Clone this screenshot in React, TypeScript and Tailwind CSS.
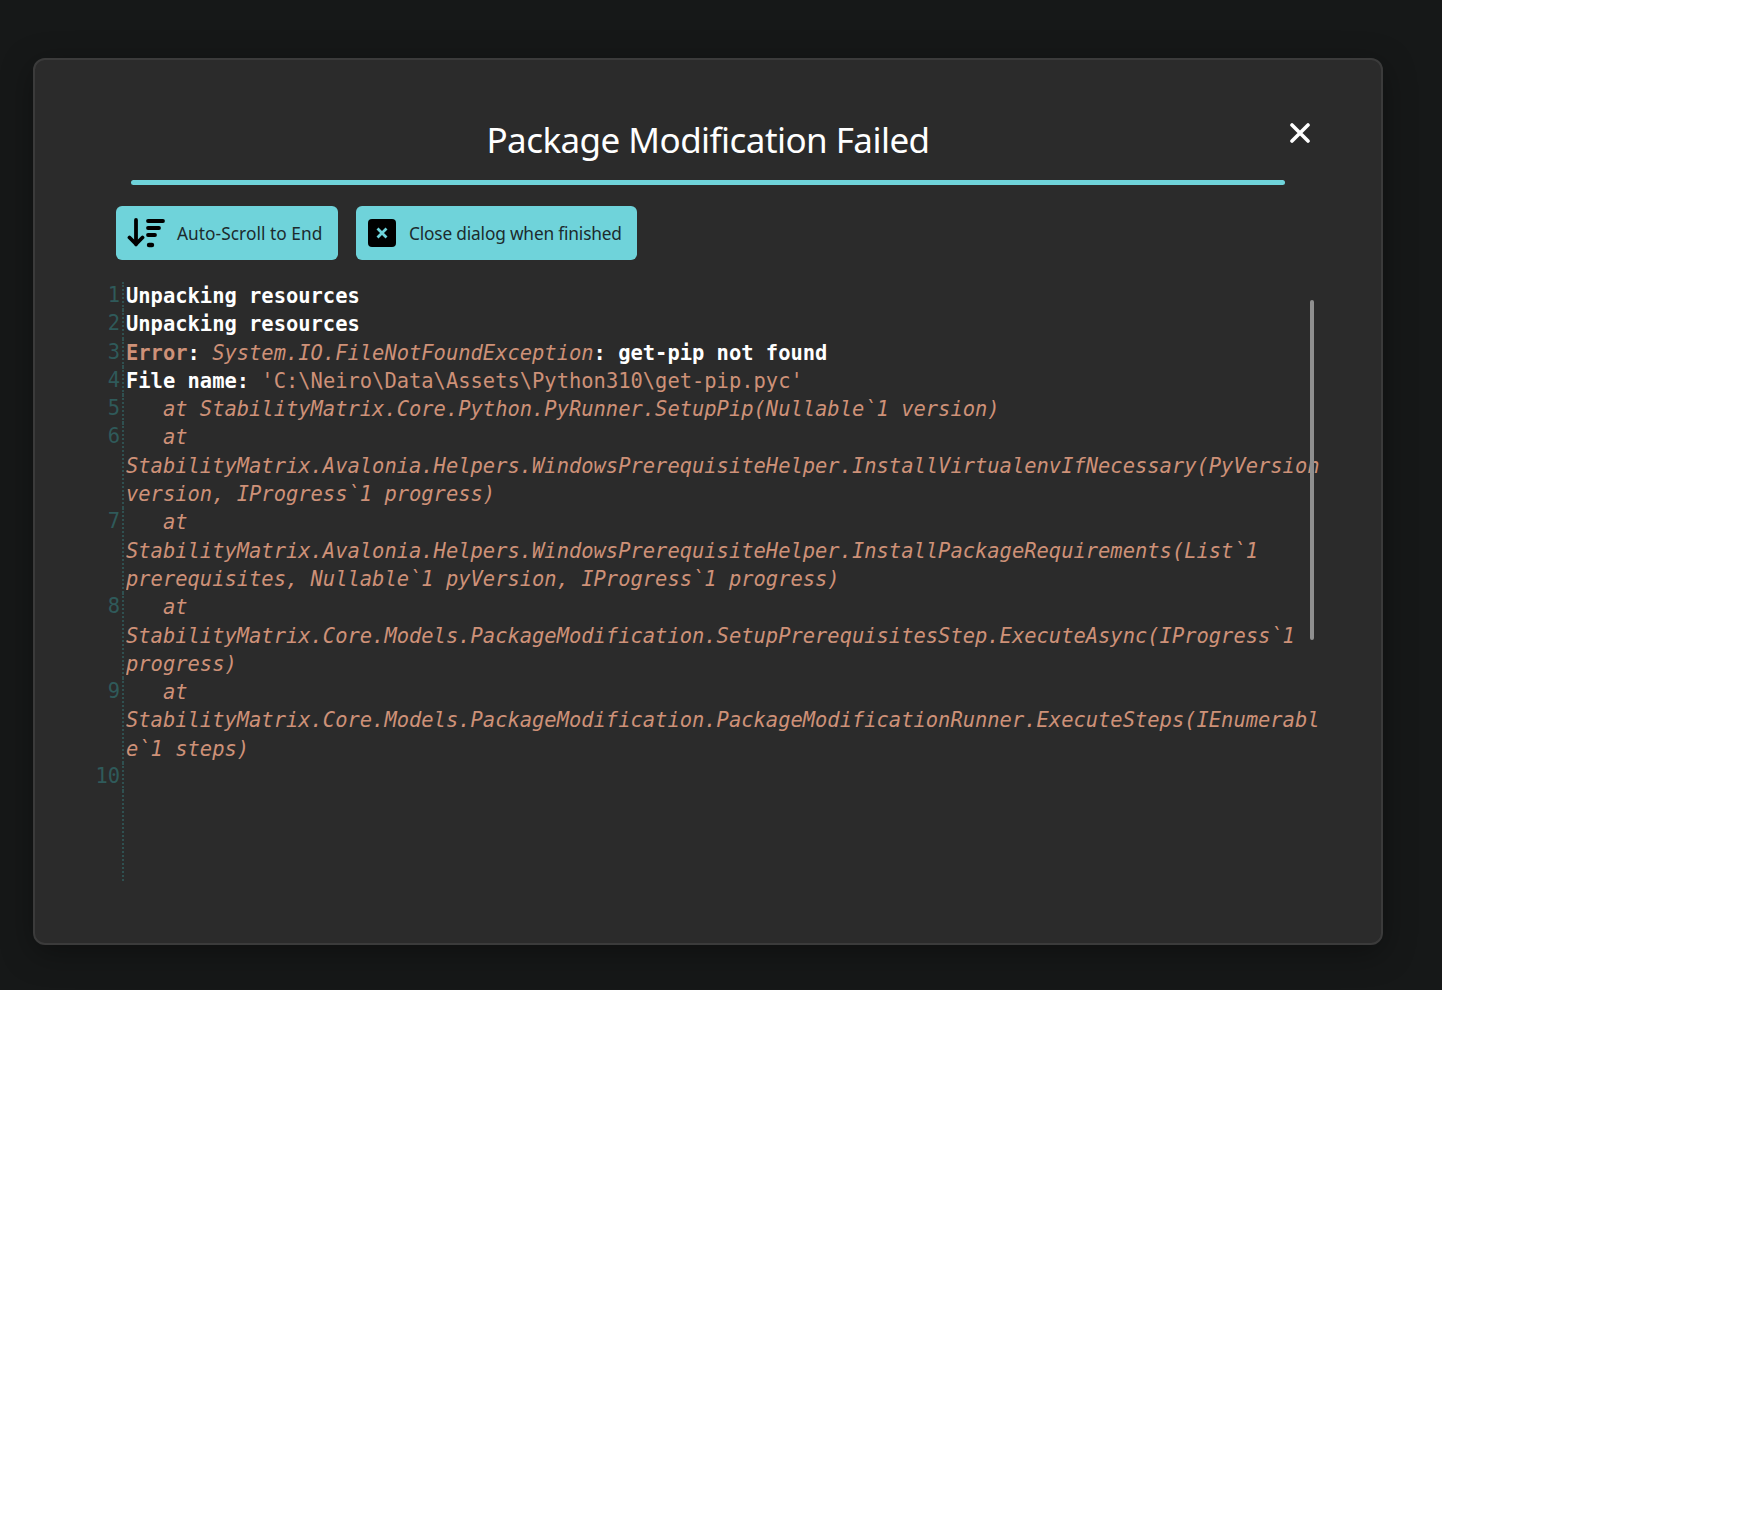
const ui = "font-['Noto_Sans',sans-serif]";

type Seg = { t: string; kind?: "plain" | "err" | "strong" };
type LogLine = { n: number; rows: Seg[][] };

const log: LogLine[] = [
  { n: 1, rows: [[{ t: "Unpacking resources" }]] },
  { n: 2, rows: [[{ t: "Unpacking resources" }]] },
  {
    n: 3,
    rows: [
      [
        { t: "Error", kind: "strong" },
        { t: ": " },
        { t: "System.IO.FileNotFoundException", kind: "err" },
        { t: ": get-pip not found" },
      ],
    ],
  },
  {
    n: 4,
    rows: [
      [
        { t: "File name: " },
        { t: "'C:\\Neiro\\Data\\Assets\\Python310\\get-pip.pyc'", kind: "plain" },
      ],
    ],
  },
  { n: 5, rows: [[{ t: "   at StabilityMatrix.Core.Python.PyRunner.SetupPip(Nullable`1 version)", kind: "err" }]] },
  {
    n: 6,
    rows: [
      [{ t: "   at", kind: "err" }],
      [{ t: "StabilityMatrix.Avalonia.Helpers.WindowsPrerequisiteHelper.InstallVirtualenvIfNecessary(PyVersion", kind: "err" }],
      [{ t: "version, IProgress`1 progress)", kind: "err" }],
    ],
  },
  {
    n: 7,
    rows: [
      [{ t: "   at", kind: "err" }],
      [{ t: "StabilityMatrix.Avalonia.Helpers.WindowsPrerequisiteHelper.InstallPackageRequirements(List`1", kind: "err" }],
      [{ t: "prerequisites, Nullable`1 pyVersion, IProgress`1 progress)", kind: "err" }],
    ],
  },
  {
    n: 8,
    rows: [
      [{ t: "   at", kind: "err" }],
      [{ t: "StabilityMatrix.Core.Models.PackageModification.SetupPrerequisitesStep.ExecuteAsync(IProgress`1", kind: "err" }],
      [{ t: "progress)", kind: "err" }],
    ],
  },
  {
    n: 9,
    rows: [
      [{ t: "   at", kind: "err" }],
      [{ t: "StabilityMatrix.Core.Models.PackageModification.PackageModificationRunner.ExecuteSteps(IEnumerabl", kind: "err" }],
      [{ t: "e`1 steps)", kind: "err" }],
    ],
  },
  { n: 10, rows: [[{ t: " " }]] },
];

function segClass(kind?: Seg["kind"]) {
  if (kind === "err") return "italic font-normal text-[#ce9178]";
  if (kind === "plain") return "font-normal text-[#ce9178]";
  if (kind === "strong") return "font-bold text-[#ce9178]";
  return "font-semibold text-white";
}

function ScrollEndIcon() {
  return (
    <svg viewBox="0 0 38 30" className="h-[30px] w-[38px]" fill="none" stroke="#000" strokeLinecap="round">
      <path d="M9 2v24" strokeWidth="3.8" />
      <path d="M2.5 19.5 9 26l6.5-6.5" strokeWidth="3.8" />
      <path d="M21 3h15" strokeWidth="3.8" />
      <path d="M21 10h11" strokeWidth="3.8" />
      <path d="M21 17h7" strokeWidth="3.8" />
      <path d="M22 27h3" strokeWidth="4.4" />
    </svg>
  );
}

function CloseBoxIcon() {
  return (
    <span className="flex h-[28px] w-[28px] items-center justify-center rounded-[4px] bg-black">
      <svg viewBox="0 0 12 12" className="h-[12px] w-[12px]" fill="none" stroke="#6fd3da" strokeWidth="2.8">
        <path d="M1.5 1.5l9 9M10.5 1.5l-9 9" />
      </svg>
    </span>
  );
}

export default function App() {
  return (
    <div className="h-[1533px] bg-white">
      <div className="h-[990px] w-[1442px] bg-[#161818] pl-[33px] pt-[58px]">
        {/* dialog */}
        <div className="relative h-[887px] w-[1350px] rounded-[12px] border-2 border-[#3b3b3b] bg-[#2b2b2b] shadow-[0_8px_32px_rgba(0,0,0,0.35)]">
          <h1 className={`${ui} ml-[96px] w-[1154px] pt-[50px] text-center text-[35px] leading-[60px] tracking-[-0.55px] text-white`}>
            Package Modification Failed
          </h1>
          <div className="ml-[96px] mt-[10px] h-[5px] w-[1154px] rounded-full bg-[#6fd3da]" />

          <button className="absolute left-[1255px] top-[63px] text-white">
            <svg viewBox="0 0 20 20" className="h-[20px] w-[20px]" fill="none" stroke="currentColor" strokeWidth="3.6" strokeLinecap="round">
              <path d="M2 2l16 16M18 2L2 18" />
            </svg>
          </button>

          {/* toggles */}
          <div className={`${ui} ml-[81px] mt-[21px] flex gap-[18px] text-[17.3px] whitespace-nowrap text-[#1c2b2d]`}>
            <div className="flex h-[54px] w-[222px] items-center gap-[12px] rounded-[6px] bg-[#6fd3da] pl-[11px]">
              <ScrollEndIcon />
              <span className="translate-y-[1px] tracking-[0.05px]">Auto-Scroll to End</span>
            </div>
            <div className="flex h-[54px] w-[281px] items-center gap-[13px] rounded-[6px] bg-[#6fd3da] pl-[12px]">
              <CloseBoxIcon />
              <span className="translate-y-[1px] tracking-[-0.17px]">Close dialog when finished</span>
            </div>
          </div>

          {/* log output */}
          <div className="relative ml-[50px] mt-[22px] h-[599px] w-[1270px] overflow-hidden font-['DejaVu_Sans_Mono',monospace] text-[20.44px] leading-[28.3px]">
            {log.map((line) => (
              <div key={line.n} className="flex">
                <div className="w-[37px] shrink-0 -translate-y-[1.5px] pr-[2px] text-right font-normal text-[#2f5a5a]">
                  {line.n}
                </div>
                <div className="min-w-0 flex-1 border-l-2 border-dotted border-[#2f5050] pl-[2px]">
                  {line.rows.map((row, i) => (
                    <div key={i} className="h-[28.3px] overflow-hidden whitespace-pre">
                      {row.map((seg, j) => (
                        <span key={j} className={segClass(seg.kind)}>
                          {seg.t}
                        </span>
                      ))}
                    </div>
                  ))}
                </div>
              </div>
            ))}
            <div className="ml-[37px] h-[110px] border-l-2 border-dotted border-[#2f5050]" />
            <div className="absolute left-[1225px] top-[18px] h-[340px] w-[4px] rounded-full bg-[#8f8f8f]" />
          </div>
        </div>
      </div>
    </div>
  );
}
